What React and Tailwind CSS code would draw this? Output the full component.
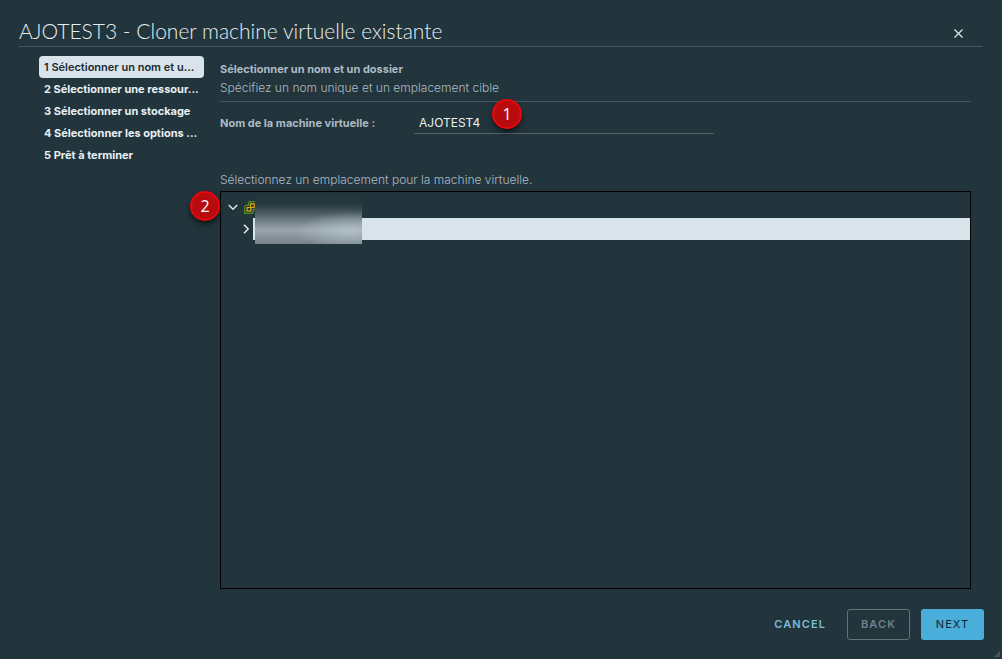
import { useState } from "react";

const steps = [
  "1 Sélectionner un nom et u...",
  "2 Sélectionner une ressour...",
  "3 Sélectionner un stockage",
  "4 Sélectionner les options ...",
  "5 Prêt à terminer",
];

function Marker({ children, className }) {
  return (
    <span
      className={`absolute flex size-[30px] items-center justify-center rounded-full border-2 border-[#e8080b] bg-[#b70b10] font-['Open_Sans',sans-serif] text-base text-white shadow-md shadow-black/50 ${className}`}
    >
      {children}
    </span>
  );
}

function DatacenterIcon() {
  return (
    <svg className="size-[13px] shrink-0" viewBox="0 0 13 13" fill="none">
      <path
        d="M4.5 1.8l1-1.1h6.8v6.8l-1.1 1h-2v2.7l-1.1 1.1H.7V5.4l1.1-1.1h2.7z"
        stroke="#4f8a22"
        strokeWidth="1.3"
      />
      <path d="M6.5 2.8h3.7v3.7H6.5zM3.1 6.5h3.7v3.7H3.1z" stroke="#e0a510" strokeWidth="1.2" />
    </svg>
  );
}

export default function App() {
  const [active, setActive] = useState(0);
  const [name, setName] = useState("AJOTEST4");
  const [open, setOpen] = useState(true);

  return (
    <div className="relative flex min-h-screen w-full flex-col bg-[#22343c] px-[19px] pb-[19px] font-[Inter,sans-serif] text-xs text-[#adbbc4]">
      {/* Header */}
      <header className="flex h-[47px] items-end justify-between border-b border-[#465762]">
        <h1 className="font-[Lato,sans-serif] text-[21px] leading-[30px] font-light text-[#e9eef1]">
          AJOTEST3 - Cloner machine virtuelle existante
        </h1>
        <button type="button" aria-label="Fermer" className="mr-[19px] mb-[7px]">
          <svg className="size-[11px]" viewBox="0 0 11 11" fill="none">
            <path d="M1.5 1.5l8 8M9.5 1.5l-8 8" stroke="#dfe6ea" strokeWidth="1.2" />
          </svg>
        </button>
      </header>

      <div className="flex flex-1">
        {/* Steps */}
        <nav className="mt-[9px] ml-5 flex w-[165px] shrink-0 flex-col">
          {steps.map((step, i) => (
            <button
              key={step}
              type="button"
              onClick={() => setActive(i)}
              className={
                i === active
                  ? "h-[22px] rounded bg-[#d9e4ea] px-[5px] text-left text-[11px] leading-5 font-semibold whitespace-nowrap text-[#1b2a32]"
                  : "h-[22px] rounded px-[5px] text-left text-[11px] leading-5 font-bold whitespace-nowrap text-[#eaf0f3]"
              }
            >
              {step}
            </button>
          ))}
        </nav>

        {/* Page */}
        <main className="mr-3 ml-4 flex flex-1 flex-col pt-3">
          <div className="border-b border-[#465762] pb-1">
            <h2 className="text-[11px] leading-5 font-bold">
              Sélectionner un nom et un dossier
            </h2>
            <p className="leading-[18px] font-light">
              Spécifiez un nom unique et un emplacement cible
            </p>
          </div>

          <div className="relative mt-[10px] flex items-center">
            <label htmlFor="vm-name" className="w-[194px] text-[11px] font-bold">
              Nom de la machine virtuelle :
            </label>
            <input
              id="vm-name"
              value={name}
              onChange={(e) => setName(e.target.value)}
              className="h-[22px] w-[300px] border-b border-[#56636b] bg-transparent px-[5px] text-[#eaf0f3] outline-none"
            />
            <Marker className="-top-[13px] left-[272px]">1</Marker>
          </div>

          <p className="mt-9 mb-[1px] leading-5 font-light">
            Sélectionnez un emplacement pour la machine virtuelle.
          </p>

          {/* Inventory tree */}
          <div className="relative flex-1 border border-black pt-1">
            <div className="flex h-[22px] items-center pl-[7px]">
              <button
                type="button"
                aria-label="Développer"
                onClick={() => setOpen(!open)}
                className="mr-[6px]"
              >
                <svg className="size-[10px]" viewBox="0 0 10 10" fill="none">
                  <path d="M0.8 3l4.2 4.2L9.2 3" stroke="#e3e9ed" strokeWidth="1.5" />
                </svg>
              </button>
              <DatacenterIcon />
            </div>
            {open && (
              <div className="flex h-[22px] items-center pl-5">
                <button type="button" aria-label="Ouvrir" className="mr-[2px]">
                  <svg className="size-[10px]" viewBox="0 0 10 10" fill="none">
                    <path d="M3 0.8L7.2 5L3 9.2" stroke="#e3e9ed" strokeWidth="1.5" />
                  </svg>
                </button>
                <div className="h-full flex-1 bg-[#d9e4ea]" />
              </div>
            )}
            <div className="absolute top-[5px] left-[34px] h-[47px] w-[107px] bg-linear-to-b from-[#26373e] from-15% via-[#9ba6ac] via-70% to-[#75828a]">
              <div className="h-full bg-radial-[at_88%_72%] from-[#b7c5cf]/80 to-transparent to-40%" />
            </div>
            <Marker className="-top-px -left-[31px]">2</Marker>
          </div>
        </main>
      </div>

      {/* Actions */}
      <footer className="-mr-px mt-5 flex h-[31px] justify-end text-[11px] tracking-widest">
        <button type="button" className="mr-[21px] font-semibold text-[#79bcd6]">
          CANCEL
        </button>
        <button
          type="button"
          disabled
          className="mr-[11px] w-[63px] rounded-[3px] border border-[#65727a] font-semibold text-[#74818a]"
        >
          BACK
        </button>
        <button type="button" className="w-[63px] rounded-[3px] bg-[#4aaedb] text-[#10222b]">
          NEXT
        </button>
      </footer>

      <svg className="absolute right-[2px] bottom-[2px] size-[6px]" viewBox="0 0 6 6">
        <path d="M6 0v6H0z" fill="#4a5358" />
      </svg>
    </div>
  );
}
